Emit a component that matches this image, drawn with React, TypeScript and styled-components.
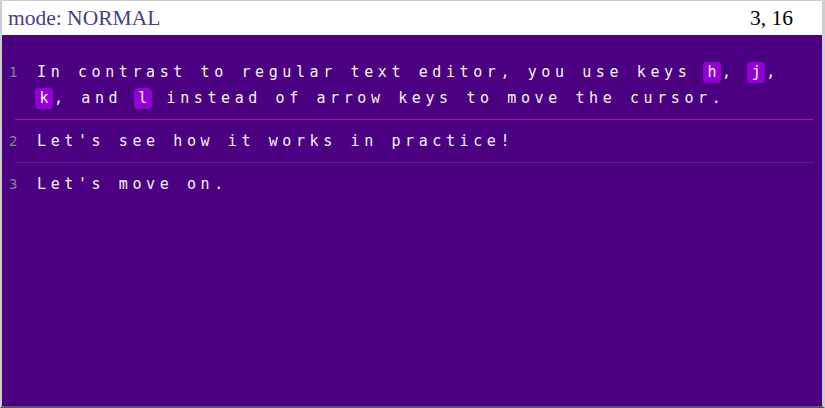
import React from 'react'
import styled, { createGlobalStyle } from 'styled-components'

const GlobalStyle = createGlobalStyle`
  html, body {
    margin: 0;
    padding: 0;
    height: 100%;
    background: #cccccc;
  }
  #root {
    height: 100%;
  }
`

const Frame = styled.div`
  box-sizing: border-box;
  height: 408px;
  border-top: 1px solid #cccccc;
  border-left: 2px solid #cccccc;
  border-right: 3px solid #cccccc;
  border-bottom: 2px solid #5a5a5a;
  display: flex;
  flex-direction: column;
  background: #4b0082;
`

const StatusBar = styled.div`
  height: 34px;
  background: #ffffff;
  display: flex;
  align-items: center;
  justify-content: space-between;
  padding: 0 29px 0 6px;
  font-family: 'Liberation Serif', 'Times New Roman', serif;
  font-size: 21.5px;
`

const Mode = styled.span`
  color: #483d8b;
`

const Position = styled.span`
  color: #000000;
`

const Editor = styled.div`
  flex: 1;
  padding: 16px 8px 0 13px;
`

const Row = styled.div<{ $rule: string }>`
  display: flex;
  padding: 8px 0;
  border-bottom: 1px solid ${(p) => p.$rule};
`

const LineNo = styled.div`
  width: 28px;
  margin-left: -6px;
  flex-shrink: 0;
  font-family: 'DejaVu Sans Mono', monospace;
  font-size: 14px;
  line-height: 26px;
  color: #858585;
`

const Text = styled.div`
  font-family: 'DejaVu Sans Mono', monospace;
  font-size: 15px;
  line-height: 26px;
  letter-spacing: 4.6px;
  color: #f4f4f4;
`

const KeyGroup = styled.span`
  white-space: nowrap;
`

const Key = styled.span`
  display: inline-block;
  background: #9400d3;
  border-radius: 4px;
  padding: 0 4.5px;
  margin-left: -2px;
  letter-spacing: 0;
  line-height: 21px;
  margin-right: 1px;
`

function K({ k }: { k: string }) {
  return (
    <KeyGroup>
      <Key>{k}</Key>,
    </KeyGroup>
  )
}

function App() {
  return (
    <>
      <GlobalStyle />
      <Frame>
        <StatusBar>
          <Mode>mode: NORMAL</Mode>
          <Position>3, 16</Position>
        </StatusBar>
        <Editor>
          <Row $rule="#9a1a9a">
            <LineNo>1</LineNo>
            <Text>
              In contrast to regular text editor, you use keys <K k="h" /> <K k="j" /> <K k="k" /> and{' '}
              <Key>l</Key> instead of arrow keys to move the cursor.
            </Text>
          </Row>
          <Row $rule="#63169a">
            <LineNo>2</LineNo>
            <Text>Let's see how it works in practice!</Text>
          </Row>
          <Row $rule="transparent">
            <LineNo>3</LineNo>
            <Text>Let's move on.</Text>
          </Row>
        </Editor>
      </Frame>
    </>
  )
}

export default App
